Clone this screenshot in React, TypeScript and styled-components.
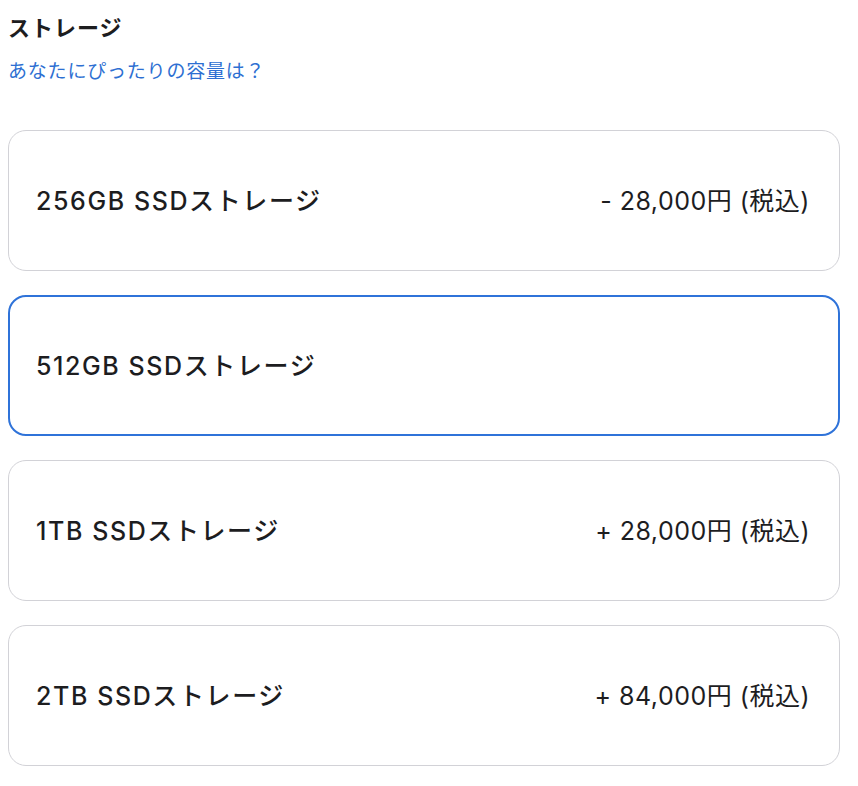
import styled, { createGlobalStyle } from "styled-components";

type Option = {
  id: string;
  label: string;
  price?: string;
};

const options: Option[] = [
  { id: "256", label: "256GB SSDストレージ", price: "- 28,000円 (税込)" },
  { id: "512", label: "512GB SSDストレージ" },
  { id: "1tb", label: "1TB SSDストレージ", price: "+ 28,000円 (税込)" },
  { id: "2tb", label: "2TB SSDストレージ", price: "+ 84,000円 (税込)" },
];

const selectedId = "512";

const App = () => {
  return (
    <>
      <GlobalStyle />
      <Section>
        <Header>
          <h2>ストレージ</h2>
          <a href="#">あなたにぴったりの容量は？</a>
        </Header>
        <List>
          {options.map(({ id, label, price }) => (
            <Card key={id} selected={id === selectedId}>
              <span className="label">{label}</span>
              {price && <span className="price">{price}</span>}
            </Card>
          ))}
        </List>
      </Section>
    </>
  );
};

const GlobalStyle = createGlobalStyle`
  body {
    margin: 8px;
    background: #fff;
    color: #1d1d1f;
    font-family: Inter, "Noto Sans CJK JP", sans-serif;
  }
`;

const Section = styled.section`
  width: 832px;
  display: flex;
  flex-direction: column;
`;

const Header = styled.div`
  display: flex;
  flex-direction: column;
  gap: 19px;
  margin-bottom: 46px;

  h2 {
    margin: 7px 0 0;
    font-size: 22px;
    font-weight: 700;
    line-height: 26px;
    letter-spacing: 1px;
  }

  a {
    font-size: 19px;
    line-height: 24px;
    letter-spacing: 0.8px;
    color: #2d6fd2;
    text-decoration: none;
  }
`;

const List = styled.ul`
  list-style: none;
  margin: 0;
  padding: 0;
  display: flex;
  flex-direction: column;
  gap: 24px;
`;

const Card = styled.li<{ selected: boolean }>`
  box-sizing: border-box;
  height: 141px;
  display: flex;
  align-items: center;
  justify-content: space-between;
  padding: 0 29px 3px ${({ selected }) => (selected ? "26px" : "27px")};
  border-radius: 18px;
  border: ${({ selected }) =>
    selected ? "2px solid #2f73d9" : "1px solid #d2d2d7"};

  .label {
    font-size: 25px;
    font-weight: 500;
    letter-spacing: 1.6px;
  }

  .price {
    font-size: 25px;
    font-weight: 400;
    letter-spacing: 0.5px;
  }
`;

export default App;
